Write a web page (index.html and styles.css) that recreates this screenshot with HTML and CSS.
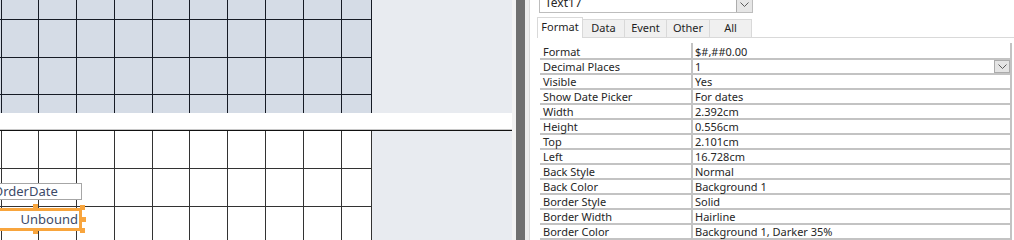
FILE: index.html
```html
<!DOCTYPE html>
<html lang="en">
<head>
  <meta charset="UTF-8"/>
  <title>Form Design - Property Sheet</title>
  <link rel="stylesheet" href="styles.css">
</head>
<body>
<div class="screen">

  <!-- Form designer -->
  <div class="designer">
    <div class="section section-top">
      <svg class="grid" width="372" height="113">
        <path d="M1.5 0V113M38.5 0V113M76.5 0V113M114.5 0V113M152.5 0V113M189.5 0V113M227.5 0V113M265.5 0V113M303.5 0V113M341.5 0V113M371.5 0V113M0 19.5H372M0 57.5H372M0 94.5H372" stroke="#161b25" stroke-width="1" shape-rendering="crispEdges"/>
      </svg>
    </div>
    <div class="section-bar"></div>
    <div class="section section-bottom">
      <svg class="grid grid-plain" width="372" height="109">
        <path d="M1.5 0V109M38.5 0V109M76.5 0V109M114.5 0V109M152.5 0V109M189.5 0V109M227.5 0V109M265.5 0V109M303.5 0V109M341.5 0V109M371.5 0V109M0 37.5H372M0 75.5H372" stroke="#333" stroke-width="1" shape-rendering="crispEdges"/>
      </svg>
      <div class="control label-box">OrderDate</div>
      <div class="control text-box">
        Unbound
        <span class="handle h-top"></span>
        <span class="handle h-top-right"></span>
        <span class="handle h-right"></span>
        <span class="handle h-bottom-right"></span>
        <span class="handle h-bottom"></span>
      </div>
    </div>
  </div>

  <!-- Splitter -->
  <div class="splitter">
    <span class="split-edge"></span>
    <span class="split-bar"></span>
    <span class="split-edge right"></span>
  </div>

  <!-- Property sheet -->
  <div class="props">
    <div class="selector">
      <span class="selector-text">Text17</span>
      <span class="drop-btn">
        <svg width="9" height="5"><path d="M0.5 0.5L4.5 4.5L8.5 0.5" fill="none" stroke="#5a5a5a"/></svg>
      </span>
    </div>

    <div class="tabs">
      <div class="tab active">Format</div>
      <div class="tab">Data</div>
      <div class="tab">Event</div>
      <div class="tab">Other</div>
      <div class="tab">All</div>
    </div>

    <div class="prop-grid">
      <div class="prop-row"><div class="prop-name">Format</div><div class="prop-value">$#,##0.00</div></div>
      <div class="prop-row"><div class="prop-name">Decimal Places</div><div class="prop-value">1<span class="cell-btn"><svg width="9" height="5"><path d="M0.5 0.5L4.5 4.5L8.5 0.5" fill="none" stroke="#5a5a5a"/></svg></span></div></div>
      <div class="prop-row"><div class="prop-name">Visible</div><div class="prop-value">Yes</div></div>
      <div class="prop-row"><div class="prop-name">Show Date Picker</div><div class="prop-value">For dates</div></div>
      <div class="prop-row"><div class="prop-name">Width</div><div class="prop-value">2.392cm</div></div>
      <div class="prop-row"><div class="prop-name">Height</div><div class="prop-value">0.556cm</div></div>
      <div class="prop-row"><div class="prop-name">Top</div><div class="prop-value">2.101cm</div></div>
      <div class="prop-row"><div class="prop-name">Left</div><div class="prop-value">16.728cm</div></div>
      <div class="prop-row"><div class="prop-name">Back Style</div><div class="prop-value">Normal</div></div>
      <div class="prop-row"><div class="prop-name">Back Color</div><div class="prop-value">Background 1</div></div>
      <div class="prop-row"><div class="prop-name">Border Style</div><div class="prop-value">Solid</div></div>
      <div class="prop-row"><div class="prop-name">Border Width</div><div class="prop-value">Hairline</div></div>
      <div class="prop-row"><div class="prop-name">Border Color</div><div class="prop-value">Background 1, Darker 35%</div></div>
    </div>
  </div>

</div>
</body>
</html>
```

FILE: styles.css
```css
body { margin: 0; overflow: hidden; font-family: "Noto Sans", "Liberation Sans", sans-serif; background: #fff; }

.screen { display: flex; width: 1014px; height: 240px; overflow: hidden; }

/* ---- designer ---- */
.designer { width: 512px; flex: none; display: flex; flex-direction: column; }
.section { background: #e8ebf0; position: relative; }
.section-top { height: 113px; }
.section-top .grid { background: #d5dce6; display: block; }
.section-bar {
  height: 16px;
  background: #fff;
  border-bottom: 1px solid #c8c8c8;
}
.section-bottom { flex: 1; border-top: 1px solid #111; }
.grid-plain { background: #fff; display: block; }

.control {
  position: absolute;
  box-sizing: border-box;
  font-size: 13px;
  color: #3c4a68;
  white-space: nowrap;
}
.label-box {
  left: -10px;
  top: 52px;
  width: 92px;
  height: 17px;
  line-height: 15px;
  padding-left: 2px;
  background: #fff;
  border: 1px solid #a6a6a6;
}
.text-box {
  left: -10px;
  top: 77px;
  width: 92px;
  height: 23px;
  line-height: 17px;
  padding-right: 1px;
  text-align: right;
  background: #fff;
  border: 3px solid #f8a53d;
}
.handle { position: absolute; width: 5px; height: 5px; background: #f8a53d; }
.h-top { left: 40px; top: -7px; }
.h-top-right { left: 87px; top: -6px; }
.h-right { left: 88px; top: 6px; }
.h-bottom-right { left: 87px; top: 17px; }
.h-bottom { left: 40px; top: 18px; }

/* ---- splitter ---- */
.splitter { display: flex; flex: none; }
.split-edge { width: 4px; background: #f2f2f2; }
.split-edge.right { width: 4px; background: #ececec; border-right: 1px solid #d9d9d9; }
.split-bar { width: 9px; background: #6f6f6f; }

/* ---- property sheet ---- */
.props { flex: 1; background: #fff; color: #262626; font-size: 11px; }

.selector {
  display: flex;
  justify-content: space-between;
  margin: -8px 0 0 9px;
  width: 214px;
  height: 21px;
  box-sizing: border-box;
  border: 1px solid #bdbdbd;
  font-size: 12px;
  line-height: 19px;
}
.selector-text { padding-left: 5px; }
.drop-btn {
  width: 16px;
  background: #e6e6e6;
  border-left: 1px solid #adadad;
  display: flex;
  justify-content: center;
  padding-top: 9px;
  box-sizing: border-box;
}

.tabs {
  display: flex;
  align-items: flex-end;
  height: 20px;
  margin: 4px 0 0 7px;
  border-bottom: 1px solid #d9d9d9;
}
.tab {
  box-sizing: border-box;
  width: 42px;
  height: 18px;
  line-height: 16px;
  text-align: center;
  font-size: 11px;
  color: #1f1f1f;
  background: #f0f0f0;
  border: 1px solid #d9d9d9;
  border-left: none;
  border-bottom: none;
}
.tab:nth-child(4) { width: 43px; }
.tab.active {
  width: 46px;
  height: 21px;
  line-height: 18px;
  margin-bottom: -1px;
  background: #fff;
  border-left: 1px solid #d9d9d9;
}

.prop-grid {
  margin: 5px 0 0 10px;
  width: 472px;
  box-sizing: border-box;
  border-right: 2px solid #c3c3c3;
}
.prop-row { display: flex; height: 15px; border-bottom: 2px solid #c3c3c3; box-sizing: content-box; }
.prop-row:not(:first-child) { height: 13px; }
.prop-row:first-child > div { padding-top: 2px; }
.prop-name {
  width: 153px;
  flex: none;
  box-sizing: border-box;
  padding-left: 3px;
  border-right: 2px solid #c3c3c3;
  line-height: 13px;
  white-space: nowrap;
}
.prop-value {
  flex: 1;
  display: flex;
  justify-content: space-between;
  padding-left: 2px;
  line-height: 13px;
  white-space: nowrap;
}
.cell-btn {
  width: 16px;
  height: 13px;
  box-sizing: border-box;
  background: #e4e4e4;
  border: 1px solid #ababab;
  display: flex;
  justify-content: center;
  align-items: center;
}
```
